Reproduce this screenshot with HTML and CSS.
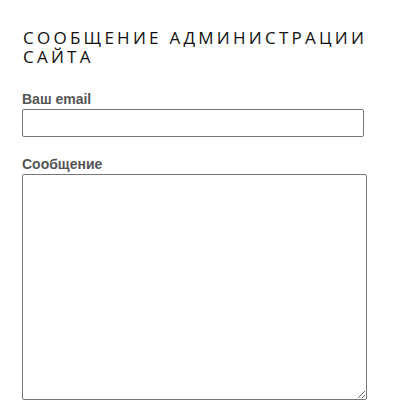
FILE: index.html
```html
<!DOCTYPE html>
<html lang="ru">
<head>
  <meta charset="UTF-8" />
  <meta name="viewport" content="width=device-width, initial-scale=1.0" />
  <title>Сообщение администрации сайта</title>
  <link rel="stylesheet" href="styles.css">
</head>
<body>
  <div class="wrap">
    <h2 class="title">Сообщение администрации сайта</h2>

    <form class="form">
      <label for="email">Ваш email</label>
      <input type="email" id="email" class="field-email" />

      <label for="msg">Сообщение</label>
      <textarea id="msg" class="field-msg"></textarea>
    </form>
  </div>
</body>
</html>
```

FILE: styles.css
```css
body {
  margin: 0;
  background: #fff;
  font-family: "Liberation Sans", Arial, sans-serif;
}
.wrap {
  padding: 28px 22px 0 22px;
}
.title {
  margin: 0 0 25px 1px;
  font-family: "Open Sans", "DejaVu Sans", sans-serif;
  font-weight: 400;
  font-size: 17px;
  line-height: 19px;
  letter-spacing: 3.25px;
  text-transform: uppercase;
  color: #111;
}
.form label {
  display: block;
  font-size: 14px;
  font-weight: bold;
  color: #555;
  line-height: 16px;
  margin-bottom: 2px;
}
.form input,
.form textarea {
  display: block;
  box-sizing: border-box;
  margin: 0;
  padding: 2px 4px;
  border: 1px solid #767676;
  border-radius: 2px;
  background: #fff;
  font-family: inherit;
  font-size: 14px;
}
.field-email {
  width: 342px;
  height: 28px;
  margin-bottom: 19px !important;
}
.field-msg {
  width: 345px;
  height: 226px;
  resize: both;
}
```
